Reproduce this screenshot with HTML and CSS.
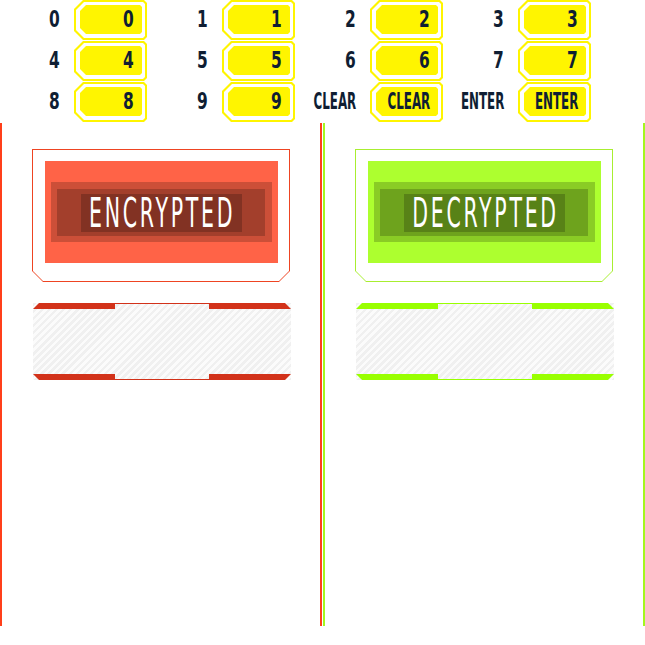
FILE: index.html
```html
<!DOCTYPE html>
<html>
<head>
<meta charset="utf-8">
<link rel="stylesheet" href="styles.css">
</head>
<body>
<div class="keypad">
  <div class="cell"><span class="lbl"><span class="t">0</span></span><div class="key"><div class="key-in"><div class="key-face"><span class="t">0</span></div></div></div></div>
  <div class="cell"><span class="lbl"><span class="t">1</span></span><div class="key"><div class="key-in"><div class="key-face"><span class="t">1</span></div></div></div></div>
  <div class="cell"><span class="lbl"><span class="t">2</span></span><div class="key"><div class="key-in"><div class="key-face"><span class="t">2</span></div></div></div></div>
  <div class="cell"><span class="lbl"><span class="t">3</span></span><div class="key"><div class="key-in"><div class="key-face"><span class="t">3</span></div></div></div></div>
  <div class="cell"><span class="lbl"><span class="t">4</span></span><div class="key"><div class="key-in"><div class="key-face"><span class="t">4</span></div></div></div></div>
  <div class="cell"><span class="lbl"><span class="t">5</span></span><div class="key"><div class="key-in"><div class="key-face"><span class="t">5</span></div></div></div></div>
  <div class="cell"><span class="lbl"><span class="t">6</span></span><div class="key"><div class="key-in"><div class="key-face"><span class="t">6</span></div></div></div></div>
  <div class="cell"><span class="lbl"><span class="t">7</span></span><div class="key"><div class="key-in"><div class="key-face"><span class="t">7</span></div></div></div></div>
  <div class="cell"><span class="lbl"><span class="t">8</span></span><div class="key"><div class="key-in"><div class="key-face"><span class="t">8</span></div></div></div></div>
  <div class="cell"><span class="lbl"><span class="t">9</span></span><div class="key"><div class="key-in"><div class="key-face"><span class="t">9</span></div></div></div></div>
  <div class="cell"><span class="lbl"><span class="t w">CLEAR</span></span><div class="key"><div class="key-in"><div class="key-face"><span class="t w">CLEAR</span></div></div></div></div>
  <div class="cell"><span class="lbl"><span class="t w">ENTER</span></span><div class="key"><div class="key-in"><div class="key-face"><span class="t w">ENTER</span></div></div></div></div>
</div>

<div class="panels">
  <section class="panel enc">
    <div class="status">
      <div class="status-in">
        <div class="fill">
          <div class="l2"><div class="l3"><div class="txt"><span>ENCRYPTED</span></div></div></div>
        </div>
      </div>
    </div>
    <div class="stripes">
      <div class="seg side left"><div class="bar top"></div><div class="bar bottom"></div></div>
      <div class="seg mid"><div class="line"></div><div class="line"></div></div>
      <div class="seg side right"><div class="bar top"></div><div class="bar bottom"></div></div>
    </div>
  </section>
  <section class="panel dec">
    <div class="status">
      <div class="status-in">
        <div class="fill">
          <div class="l2"><div class="l3"><div class="txt"><span>DECRYPTED</span></div></div></div>
        </div>
      </div>
    </div>
    <div class="stripes">
      <div class="seg side left"><div class="bar top"></div><div class="bar bottom"></div></div>
      <div class="seg mid"><div class="line"></div><div class="line"></div></div>
      <div class="seg side right"><div class="bar top"></div><div class="bar bottom"></div></div>
    </div>
  </section>
</div>
</body>
</html>
```

FILE: styles.css
```css
* { box-sizing: border-box; }
html, body { margin: 0; padding: 0; background: #fff; }
body { width: 645px; height: 645px; overflow: hidden; font-family: "DejaVu Sans Condensed", "DejaVu Sans", sans-serif; }

.keypad {
  display: grid;
  grid-template-columns: repeat(4, 148px);
  grid-auto-rows: 40px;
  row-gap: 1px;
}
.cell {
  display: grid;
  grid-template-columns: 74px 73px;
  align-items: center;
}
.lbl {
  display: flex;
  justify-content: flex-end;
  padding-right: 14px;
  font-size: 22px;
  font-weight: bold;
  color: #0f1e33;
  line-height: 1;
  min-width: 0;
}
.t {
  display: inline-block;
  flex-shrink: 0;
  white-space: nowrap;
  transform: scaleX(0.78) scaleY(1.06);
  transform-origin: right center;
}
.t.w {
  transform: scaleX(0.6) scaleY(1.06);
}
.key {
  height: 40px;
  background: #fff500;
  padding: 2px;
  clip-path: polygon(9px 0, calc(100% - 3px) 0, 100% 3px, 100% calc(100% - 3px), calc(100% - 3px) 100%, 9px 100%, 0 calc(100% - 9px), 0 9px);
}
.key-in {
  height: 100%;
  background: #fff;
  padding: 3px 3px 4px 4px;
  clip-path: polygon(8px 0, calc(100% - 2px) 0, 100% 2px, 100% calc(100% - 2px), calc(100% - 2px) 100%, 8px 100%, 0 calc(100% - 8px), 0 8px);
}
.key-face {
  height: 100%;
  background: #fff500;
  display: flex;
  align-items: center;
  justify-content: flex-end;
  padding-right: 8px;
  font-size: 22px;
  font-weight: bold;
  color: #0f1e33;
  line-height: 1;
  clip-path: polygon(6px 0, calc(100% - 2px) 0, 100% 2px, 100% calc(100% - 2px), calc(100% - 2px) 100%, 6px 100%, 0 calc(100% - 6px), 0 6px);
}

.panels {
  display: grid;
  grid-template-columns: 322px 322px;
  column-gap: 1px;
  height: 503px;
  margin-top: 1px;
}
.panel {
  border-left: 2px solid;
  border-right: 2px solid;
  padding: 26px 30px 0 30px;
}
.enc { border-color: #ff3f1a; --line: #ee4422; --fill: #ff6347; --bar: #d2321a; }
.dec { border-color: #a3f71e; --line: #a8ee30; --fill: #adff2f; --bar: #99ff00; }

.status {
  height: 133px;
  background: var(--line);
  padding: 1px;
  clip-path: polygon(0 0, 100% 0, 100% calc(100% - 11px), calc(100% - 11px) 100%, 11px 100%, 0 calc(100% - 11px));
}
.status-in {
  height: 100%;
  background: #fff;
  padding: 11px 11px 18px 12px;
  clip-path: polygon(0 0, 100% 0, 100% calc(100% - 10px), calc(100% - 10px) 100%, 10px 100%, 0 calc(100% - 10px));
}
.fill {
  height: 100%;
  background: var(--fill);
  display: flex;
  align-items: center;
  padding: 0 6px;
}
.l2 {
  flex: 1;
  height: 60px;
  background: rgba(0, 0, 0, 0.2);
  padding: 7px 7px 6px 6px;
}
.l3 {
  height: 100%;
  background: rgba(0, 0, 0, 0.2);
  display: flex;
  align-items: center;
  justify-content: center;
}
.txt {
  width: 161px;
  height: 38px;
  background: rgba(0, 0, 0, 0.2);
  display: flex;
  align-items: center;
  justify-content: center;
  color: #fff;
  font-family: "DejaVu Sans", sans-serif;
  font-weight: normal;
  font-size: 38px;
  line-height: 1;
}
.txt span {
  display: inline-block;
  flex-shrink: 0;
  letter-spacing: 5px;
  transform: scaleX(0.54) scaleY(1.06);
  white-space: nowrap;
  padding-left: 5px;
}

.stripes {
  margin: 21px 0 0 1px;
  width: 258px;
  height: 77px;
  display: grid;
  grid-template-columns: 82px 94px 82px;
  background: repeating-linear-gradient(135deg, #f0f0f0 0 2.5px, #fbfbfb 2.5px 5px);
}
.seg {
  display: flex;
  flex-direction: column;
  justify-content: space-between;
}
.bar { height: 6px; background: var(--bar); }
.line { height: 1px; background: var(--bar); }
.left .top { clip-path: polygon(6px 0, 100% 0, 100% 100%, 0 100%); }
.left .bottom { clip-path: polygon(0 0, 100% 0, 100% 100%, 6px 100%); }
.right .top { clip-path: polygon(0 0, calc(100% - 6px) 0, 100% 100%, 0 100%); }
.right .bottom { clip-path: polygon(0 0, 100% 0, calc(100% - 6px) 100%, 0 100%); }
```
